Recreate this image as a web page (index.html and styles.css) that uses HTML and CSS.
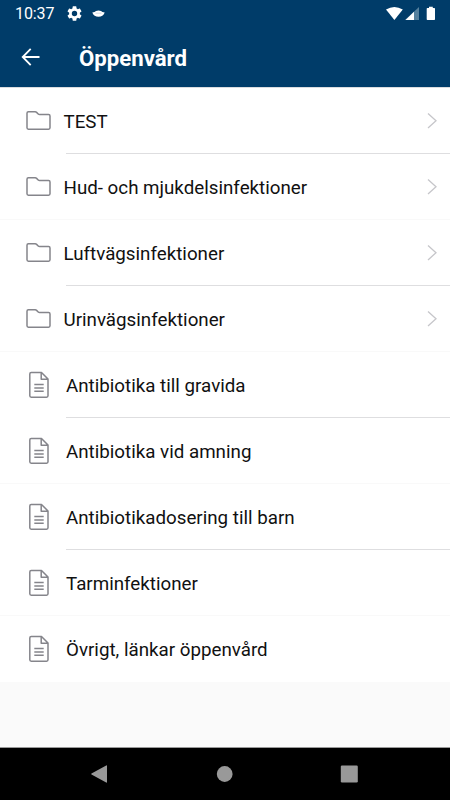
FILE: index.html
```html
<!DOCTYPE html>
<html lang="sv">
<head>
<meta charset="utf-8">
<title>Öppenvård</title>
<link rel="stylesheet" href="styles.css">
</head>
<body>
<svg class="defs" aria-hidden="true">
  <symbol id="folder" viewBox="0 0 26 22"><path d="M1 3.2Q1 1.8 2.4 1.8H9.2Q10 1.8 10.6 2.4L12.2 4Q12.8 4.6 13.6 4.6H22.6Q24 4.6 24 6V17.8Q24 19.2 22.6 19.2H2.4Q1 19.2 1 17.8Z"/></symbol>
  <symbol id="doc" viewBox="0 0 22 28"><path d="M3.2 1.5H13.5L20 8V24.8Q20 26.2 18.6 26.2H3.2Q1.8 26.2 1.8 24.8V2.9Q1.8 1.5 3.2 1.5ZM13.2 1.5V8.2H20"/><path d="M6.3 13.5H15.7M6.3 16.9H15.7M6.3 20.3H15.7"/></symbol>
  <symbol id="chevron" viewBox="0 0 12 18"><path d="M2 1.5L10 8.7L2 15.9"/></symbol>
</svg>
<header class="header">
  <div class="status">
    <span class="clock">10:37</span>
    <svg class="gear" viewBox="2 2 20 20"><path fill-rule="evenodd" d="M19.14 12.94a7 7 0 0 0 0-1.88l2.03-1.58a.5.5 0 0 0 .12-.61l-1.92-3.32a.5.5 0 0 0-.59-.22l-2.39.96a7 7 0 0 0-1.62-.94l-.36-2.54a.5.5 0 0 0-.48-.41h-3.84a.5.5 0 0 0-.47.41l-.36 2.54a7 7 0 0 0-1.62.94l-2.39-.96a.5.5 0 0 0-.59.22L2.74 8.87a.5.5 0 0 0 .12.61l2.03 1.58a7 7 0 0 0 0 1.88l-2.03 1.58a.5.5 0 0 0-.12.61l1.92 3.32c.12.22.37.29.59.22l2.39-.96c.5.38 1.03.7 1.62.94l.36 2.54c.05.24.24.41.48.41h3.84c.24 0 .44-.17.47-.41l.36-2.54a7 7 0 0 0 1.62-.94l2.39.96c.22.08.47 0 .59-.22l1.92-3.32a.5.5 0 0 0-.12-.61ZM12 15.6a3.6 3.6 0 1 1 0-7.2 3.6 3.6 0 0 1 0 7.2Z"/></svg>
    <svg class="mask" viewBox="0 0 13 8"><path d="M.3 2.5Q3 2 4 1Q6.5 0 9 1Q10 2 12.7 2.5Q11 6.8 6.5 6.8Q2 6.8 .3 2.5Z"/><path class="seam" d="M3.5 3.2H9.5"/></svg>
    <svg class="signals" viewBox="0 0 51 16"><path d="M0 3.6Q8.3-1.8 16.8 3.6L8.4 14Z"/><path class="dim" d="M33 1V14H19Z"/><path d="M28 5.7V14H19.5Z"/><path d="M40.7 2.7Q40.7 2 41.4 2H43V.8H46.8V2H48.3Q49 2 49 2.7V13.3Q49 14 48.3 14H41.4Q40.7 14 40.7 13.3Z"/></svg>
  </div>
  <div class="toolbar">
    <svg class="back" viewBox="0 0 20 20"><path d="M18.5 10H2M9.7 1.8L1.7 10L9.7 18.2"/></svg>
    <h1 class="title">Öppenvård</h1>
  </div>
</header>
<main class="list">
  <div class="row"><svg class="folder"><use href="#folder"/></svg><span class="label">TEST</span><svg class="chevron"><use href="#chevron"/></svg></div>
  <div class="row"><svg class="folder"><use href="#folder"/></svg><span class="label">Hud- och mjukdelsinfektioner</span><svg class="chevron"><use href="#chevron"/></svg></div>
  <div class="row"><svg class="folder"><use href="#folder"/></svg><span class="label">Luftvägsinfektioner</span><svg class="chevron"><use href="#chevron"/></svg></div>
  <div class="row"><svg class="folder"><use href="#folder"/></svg><span class="label">Urinvägsinfektioner</span><svg class="chevron"><use href="#chevron"/></svg></div>
  <div class="row"><svg class="doc"><use href="#doc"/></svg><span class="label">Antibiotika till gravida</span></div>
  <div class="row"><svg class="doc"><use href="#doc"/></svg><span class="label">Antibiotika vid amning</span></div>
  <div class="row"><svg class="doc"><use href="#doc"/></svg><span class="label">Antibiotikadosering till barn</span></div>
  <div class="row"><svg class="doc"><use href="#doc"/></svg><span class="label">Tarminfektioner</span></div>
  <div class="row"><svg class="doc"><use href="#doc"/></svg><span class="label">Övrigt, länkar öppenvård</span></div>
</main>
<nav class="navbar">
  <svg viewBox="0 0 18 18"><path d="M16.2.5Q17 0 17 1V17Q17 18 16.2 17.5L1.5 9.5Q.8 9 1.5 8.5Z"/></svg>
  <svg viewBox="0 0 18 18"><circle cx="9.7" cy="9" r="7.9"/></svg>
  <svg viewBox="0 0 18 18"><rect x=".8" y=".5" width="17" height="17" rx="1.2"/></svg>
</nav>
</body>
</html>
```

FILE: styles.css
```css
* { box-sizing: border-box; }
body {
  margin: 0;
  height: 800px;
  display: flex;
  flex-direction: column;
  background: #fafafa;
  font-family: Roboto, sans-serif;
}
svg { flex: none; display: block; }
.defs { position: absolute; width: 0; height: 0; }
.header {
  height: 88px;
  background: #003c69;
  border-bottom: 1px solid #d9dcdf;
  color: #fff;
}
.status {
  height: 27px;
  padding: 0 13px 0 15px;
  display: flex;
  align-items: center;
}
.status svg { fill: #fff; }
.clock { width: 52px; font-size: 16px; line-height: 27px; letter-spacing: -.1px; }
.gear { width: 15px; height: 15px; margin-top: -1px; }
.mask { width: 13px; height: 8px; margin-left: 10px; }
.mask .seam { stroke: #8ba4b8; stroke-width: .4; fill: none; }
.signals { width: 51px; height: 16px; margin-left: auto; }
.signals .dim { fill: #55809d; }
.toolbar {
  height: 60px;
  padding-left: 21px;
  display: flex;
  align-items: center;
}
.back { width: 20px; height: 20px; fill: none; stroke: #fff; stroke-width: 1.8; }
.title { margin: 2px 0 0 38px; font-size: 22.2px; font-weight: 700; line-height: 28px; }
.list { background: #fff; }
.row {
  height: 66px;
  padding: 0 12px 0 26px;
  display: flex;
  align-items: center;
  border-bottom: 1px solid #f9f9f9;
}
.row:nth-child(odd) {
  border-bottom-color: transparent;
  background: linear-gradient(#dedee0, #dedee0) 66px 65px / 384px 1px no-repeat border-box;
}
.row:last-child { background: none; }
.folder, .doc { fill: none; stroke: #85858b; stroke-width: 1.5; stroke-linejoin: round; }
.folder { width: 26px; height: 22px; margin-right: 11.5px; }
.doc { width: 22px; height: 28px; margin: 0 16px 0 2px; }
.label { padding-top: 2px; font-size: 18.75px; line-height: 24px; color: #111; }
.chevron { width: 12px; height: 18px; margin-left: auto; fill: none; stroke: #c6c6ca; stroke-width: 1.3; }
.navbar {
  height: 53px;
  margin-top: auto;
  padding: 0 92px 1px 90px;
  display: flex;
  align-items: center;
  justify-content: space-between;
  background: #000;
  border-top: 1px solid #999;
}
.navbar svg { width: 18px; height: 18px; fill: #999; }
```
